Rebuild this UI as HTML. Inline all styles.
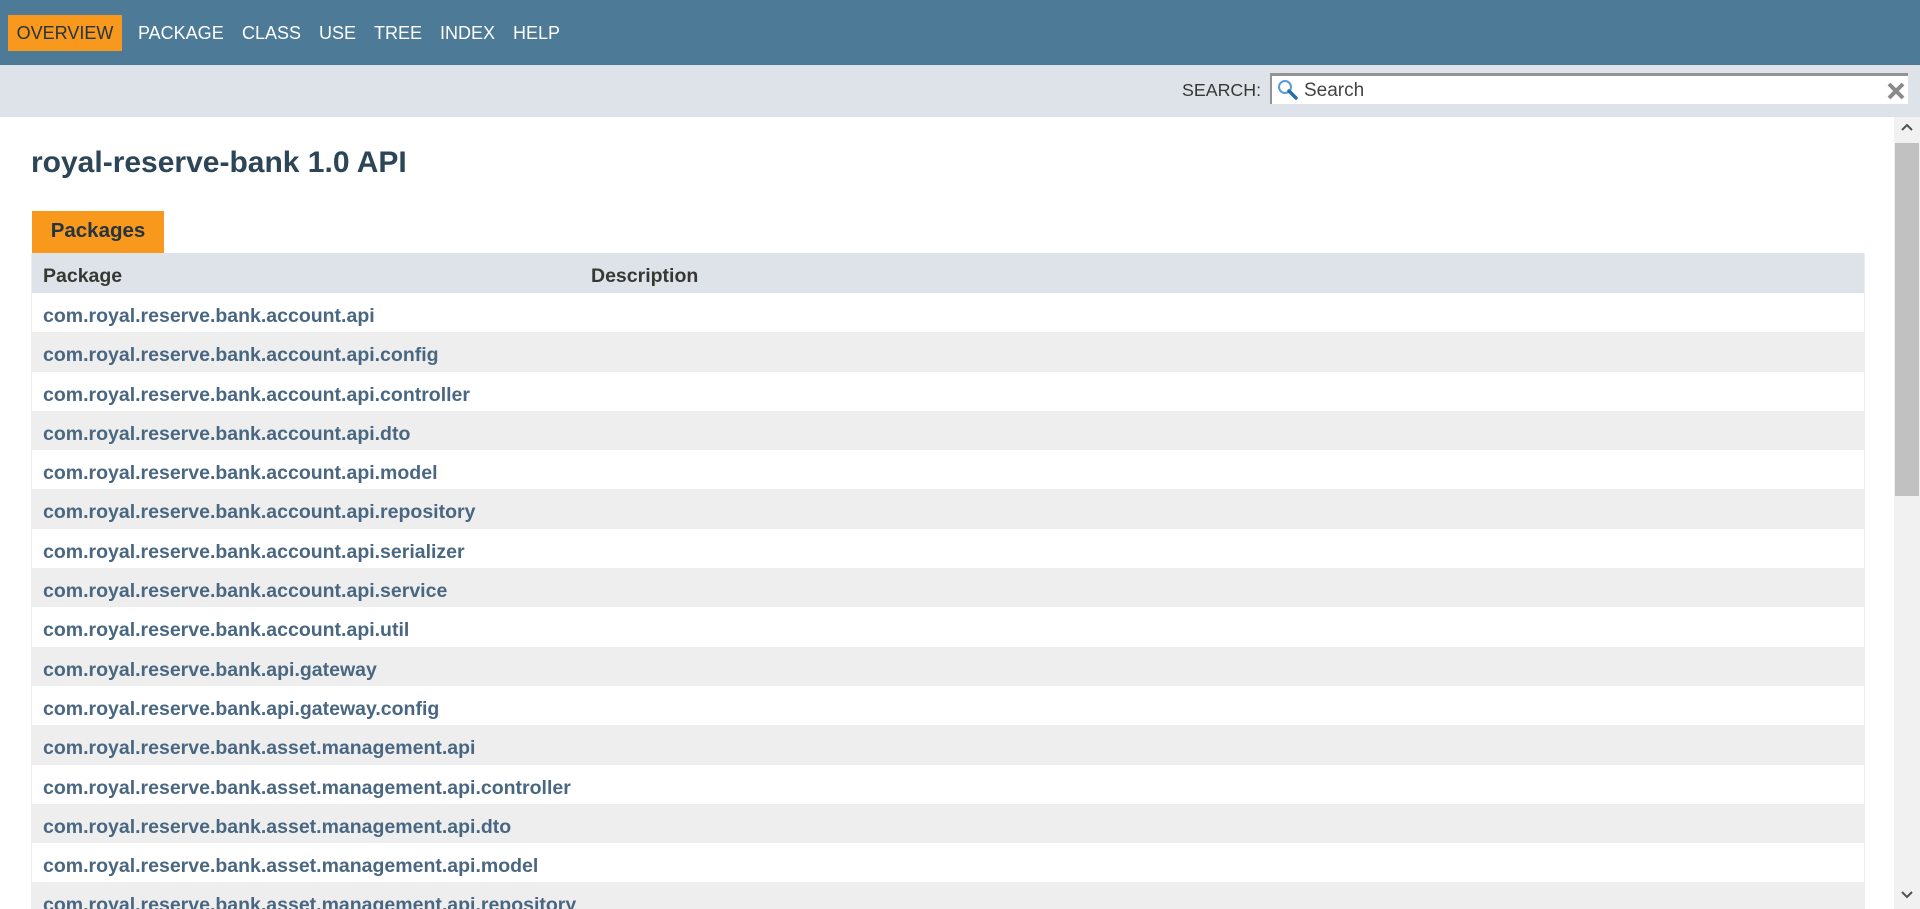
<!DOCTYPE html>
<html><head><meta charset="utf-8"><style>
*{margin:0;padding:0;box-sizing:border-box}
html,body{width:1920px;height:909px;overflow:hidden;background:#fff;font-family:"Liberation Sans",Arial,sans-serif}
#wrap{position:relative;width:1920px;height:909px;overflow:hidden}
.nav{position:absolute;left:0;top:0;width:1920px;height:65px;background:#4d7a97}
.nav span{position:absolute;top:15px;height:36px;line-height:36px;color:#fff;font-size:18px}
.nav .ov{left:8px;width:114px;background:#f8981d;color:#253441;text-align:center}
.sub{position:absolute;left:0;top:65px;width:1920px;height:52px;background:#dee3e9}
.lbl{position:absolute;left:1182px;top:80px;font-size:17.8px;color:#353833}
.inp{position:absolute;left:1270px;top:73px;width:638px;height:31px;background:#fff;border-top:3px solid #939393;border-left:2px solid #939393}
.inp .t{position:absolute;left:32px;top:4px;font-size:19px;color:#444}
.sb{position:absolute;left:1894px;top:117px;width:26px;height:792px;background:#f1f1f1}
.thumb{position:absolute;left:1895px;top:143px;width:24px;height:353px;background:#c1c1c1}
h1{position:absolute;left:31px;top:146px;font-size:30px;color:#2c4557;font-weight:bold}
.tab{position:absolute;left:32px;top:211px;width:132px;height:42px;background:#f8981d;color:#253441;font-weight:bold;font-size:20.5px;line-height:40px;text-align:center}
.tbl{position:absolute;left:31px;top:253px;width:1834px}
.row{height:39.3px;line-height:46px;font-size:19.5px;font-weight:bold;padding-left:11px;color:#4a6782;position:relative;border-left:1px solid #eee;border-right:1px solid #eee;white-space:nowrap}
.hd{background:#dee3e9;color:#353833;height:40px;line-height:46px}
.hd b{position:absolute;left:559px}
.row:nth-child(odd){background:#eeeeee}
.row:nth-child(even){background:#fff}
.hd.row{background:#dee3e9}
</style></head><body><div id="wrap">
<div class="nav"><span class="ov">OVERVIEW</span><span style="left:138px">PACKAGE</span><span style="left:242px">CLASS</span><span style="left:319px">USE</span><span style="left:374px">TREE</span><span style="left:440px">INDEX</span><span style="left:513px">HELP</span></div>
<div class="sub"></div>
<div class="lbl">SEARCH:</div>
<div class="inp"><svg style="position:absolute;left:4px;top:2px" width="24" height="24" viewBox="0 0 24 24"><circle cx="9" cy="9" r="6" fill="none" stroke="#5b9bd5" stroke-width="2"/><path d="M13 13l7 7" stroke="#2a6fa8" stroke-width="3.5" stroke-linecap="round"/></svg><span class="t">Search</span><svg style="position:absolute;right:2px;top:5px" width="20" height="20" viewBox="0 0 20 20"><path d="M3 3l14 14M17 3L3 17" stroke="#8a8a8a" stroke-width="4"/></svg></div>
<h1>royal-reserve-bank 1.0 API</h1>
<div class="tab">Packages</div>
<div class="tbl">
<div class="row hd">Package<b>Description</b></div>
<div class="row">com.royal.reserve.bank.account.api</div>
<div class="row">com.royal.reserve.bank.account.api.config</div>
<div class="row">com.royal.reserve.bank.account.api.controller</div>
<div class="row">com.royal.reserve.bank.account.api.dto</div>
<div class="row">com.royal.reserve.bank.account.api.model</div>
<div class="row">com.royal.reserve.bank.account.api.repository</div>
<div class="row">com.royal.reserve.bank.account.api.serializer</div>
<div class="row">com.royal.reserve.bank.account.api.service</div>
<div class="row">com.royal.reserve.bank.account.api.util</div>
<div class="row">com.royal.reserve.bank.api.gateway</div>
<div class="row">com.royal.reserve.bank.api.gateway.config</div>
<div class="row">com.royal.reserve.bank.asset.management.api</div>
<div class="row">com.royal.reserve.bank.asset.management.api.controller</div>
<div class="row">com.royal.reserve.bank.asset.management.api.dto</div>
<div class="row">com.royal.reserve.bank.asset.management.api.model</div>
<div class="row">com.royal.reserve.bank.asset.management.api.repository</div>
<div class="row">com.royal.reserve.bank.asset.management.api.service</div>
</div>
<div class="sb"></div><div class="thumb"></div>
<svg style="position:absolute;left:1899px;top:120px" width="16" height="14" viewBox="0 0 16 14"><path d="M3 10l5-5 5 5" stroke="#505050" stroke-width="2" fill="none"/></svg>
<svg style="position:absolute;left:1899px;top:888px" width="16" height="14" viewBox="0 0 16 14"><path d="M3 4l5 5 5-5" stroke="#505050" stroke-width="2" fill="none"/></svg>
</div></body></html>
